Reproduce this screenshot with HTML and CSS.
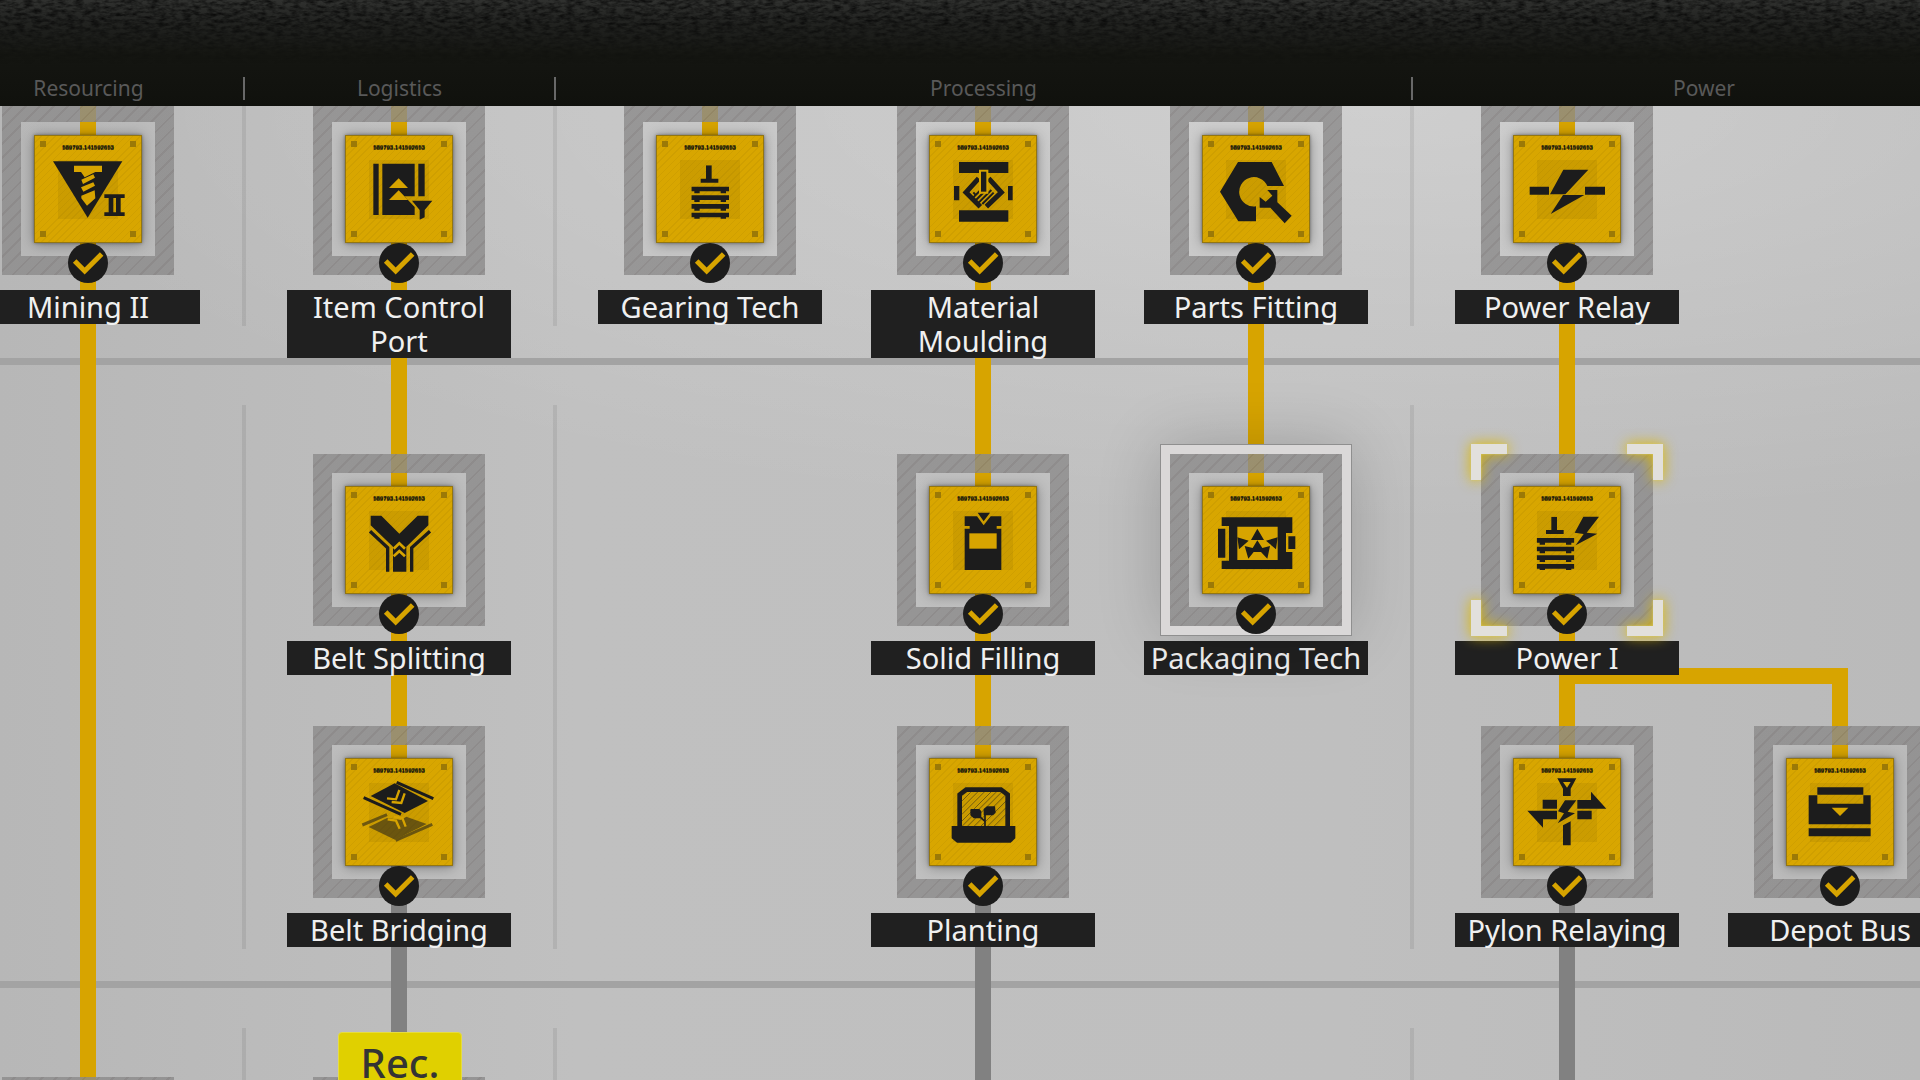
FILE: index.html
```
<!DOCTYPE html>
<html lang="en">
	<head>
		<meta charset="utf-8">
		<title>Tech Tree</title>
		<link rel="stylesheet" href="styles.css">
	</head>
	<body>
		<svg class="defs" aria-hidden="true">
			<filter id="grain" x="0" y="0" width="100%" height="100%">
				<feTurbulence type="fractalNoise" baseFrequency="0.12 0.3" numOctaves="3" seed="4"/>
				<feColorMatrix type="matrix" values="0 0 0 0 0  0 0 0 0 0  0 0 0 0 0  2 0 0 0 -0.7"/>
			</filter>
			<symbol id="tick" viewBox="0 0 120 120">
				<circle cx="60" cy="60" r="60" fill="#1c1c1c"/>
				<path d="M20 54L50 84L101 33" fill="none" stroke="#d7a400" stroke-width="15"/>
			</symbol>
			<symbol id="pallets" viewBox="0 0 113 160">
				<path d="M44 0H61V40H81V52H28V40H44Z"/>
				<path id="pallet" d="M0 64H113V78H104V84H88V78H25V84H9V78H0Z"/>
				<use href="#pallet" y="26"/>
				<use href="#pallet" y="52"/>
				<use href="#pallet" y="78"/>
			</symbol>
		</svg>

		<header>
			<svg class="grain" aria-hidden="true"><rect width="100%" height="100%" filter="url(#grain)"/></svg>
			<div class="categories">
				<span>Resourcing</span>
				<span>Logistics</span>
				<span>Processing</span>
				<span>Power</span>
			</div>
		</header>

		<main>
			<div class="board">
				<section class="tier">
					<div class="group">
						<div class="cell">
							<i class="link in"></i><i class="link out far"></i>
							<button class="node">
								<span class="frame"><span class="tile"><span class="serial">589793.141592653</span>
									<svg class="icon" viewBox="0 0 324 324">
										<path d="M57 79H265L161 248Z"/>
										<path class="cut" d="M120 92H204V111H184L152 127L141 111H120ZM142 134L178 118L183 128L147 147ZM141 157L178 142L183 152L148 170ZM142 182L182 166L184 190L159 212L142 190Z"/>
										<path d="M211 178H272V189H260V232H272V243H211V232H224V189H211ZM238 189V232H246V189Z" fill-rule="evenodd"/>
									</svg>
								</span></span>
								<svg class="tick"><use href="#tick"/></svg>
								<span class="label">Mining II</span>
							</button>
						</div>
					</div>
					<div class="group">
						<div class="cell">
							<i class="link in"></i><i class="link out far"></i>
							<button class="node">
								<span class="frame"><span class="tile"><span class="serial">589793.141592653</span>
									<svg class="icon" viewBox="0 0 324 324">
										<path d="M85 86H101V240H85ZM112 86H209V184H178L209 216V240H112ZM220 86H239V184H220Z"/>
										<path class="cut" d="M161 130L189 159H132ZM161 166L189 195H132Z"/>
										<path d="M201 197H262L239 225V247L224 254V225Z"/>
									</svg>
								</span></span>
								<svg class="tick"><use href="#tick"/></svg>
								<span class="label">Item Control Port</span>
							</button>
						</div>
					</div>
					<div class="group">
						<div class="cell">
							<i class="link in"></i>
							<button class="node">
								<span class="frame"><span class="tile"><span class="serial">589793.141592653</span>
									<svg class="icon" viewBox="0 0 324 324">
										<use href="#pallets" x="106" y="91" width="113" height="160"/>
									</svg>
								</span></span>
								<svg class="tick"><use href="#tick"/></svg>
								<span class="label">Gearing Tech</span>
							</button>
						</div>
						<div class="cell">
							<i class="link in"></i><i class="link out far"></i>
							<button class="node">
								<span class="frame"><span class="tile"><span class="serial">589793.141592653</span>
									<svg class="icon" viewBox="0 0 324 324">
										<path d="M90 81H238V114H90ZM90 226H238V260H90ZM75 153H91V196H75ZM237 153H251V196H237Z"/>
										<path class="line" stroke-width="15" d="M149 130L111 172L154 215M179 130L217 172L172 215"/>
										<path class="line" stroke-width="6" d="M133 172L141 181M133 187L152 168M141 195L174 162M149 203L187 165M160 207L194 173"/>
										<path d="M156 110H172V170H156Z" stroke="#d7a400" stroke-width="12" paint-order="stroke"/>
									</svg>
								</span></span>
								<svg class="tick"><use href="#tick"/></svg>
								<span class="label">Material Moulding</span>
							</button>
						</div>
						<div class="cell">
							<i class="link in"></i><i class="link out far"></i>
							<button class="node">
								<span class="frame"><span class="tile"><span class="serial">589793.141592653</span>
									<svg class="icon" viewBox="0 0 324 324">
										<path d="M108 81H209L246 153H196A44 44 0 1 0 162 214V259H109L54 170Z"/>
										<path d="M196 165H226V202L269 242L248 265L205 218H173V186L191 200L211 182Z"/>
									</svg>
								</span></span>
								<svg class="tick"><use href="#tick"/></svg>
								<span class="label">Parts Fitting</span>
							</button>
						</div>
					</div>
					<div class="group">
						<div class="cell">
							<i class="link in"></i><i class="link out far"></i>
							<button class="node">
								<span class="frame"><span class="tile"><span class="serial">589793.141592653</span>
									<svg class="icon" viewBox="0 0 324 324">
										<path d="M151 104H226L157 178H111ZM157 180H214L113 237L150 180ZM50 155H108V179H50ZM216 155H276V179H216Z"/>
									</svg>
								</span></span>
								<svg class="tick"><use href="#tick"/></svg>
								<span class="label">Power Relay</span>
							</button>
						</div>
					</div>
				</section>

				<section class="tier">
					<div class="group">
						<div class="cell tall">
							<i class="link through"></i>
						</div>
					</div>
					<div class="group">
						<div class="cell">
							<i class="link in"></i><i class="link out"></i>
							<button class="node">
								<span class="frame"><span class="tile"><span class="serial">589793.141592653</span>
									<svg class="icon" viewBox="0 0 324 324">
										<path d="M77 89H109L163 143L218 89H250V118L184 182V257H144V182L77 118Z"/>
										<path class="line" stroke-width="10" d="M75 136L128 185V257M255 136L200 185V257"/>
										<path class="line cutline" stroke-width="8" d="M146 188L163 172L180 188M146 211L163 195L180 211"/>
									</svg>
								</span></span>
								<svg class="tick"><use href="#tick"/></svg>
								<span class="label">Belt Splitting</span>
							</button>
						</div>
						<div class="cell">
							<i class="link in"></i><i class="link out far todo"></i>
							<button class="node">
								<span class="frame"><span class="tile"><span class="serial">589793.141592653</span>
									<svg class="icon" viewBox="0 0 324 324">
										<g opacity="0.55">
											<path d="M71 207L126 180L168 186L184 176L245 198L150 245Z"/>
											<path class="line" stroke-width="9" d="M52 201L126 170M152 247L262 199"/>
										</g>
										<path class="line cutline" stroke-width="7" d="M128 184L153 188L164 212M146 176L172 180L182 206"/>
										<path d="M77 114L149 76L249 129L179 165Z"/>
										<path class="line" stroke-width="9" d="M155 73L265 122M56 119L168 169"/>
										<path class="line cutline" stroke-width="7" d="M126 121L153 124L163 96M140 132L169 135L179 106"/>
									</svg>
								</span></span>
								<svg class="tick"><use href="#tick"/></svg>
								<span class="label">Belt Bridging</span>
							</button>
						</div>
					</div>
					<div class="group">
						<div class="cell"></div>
						<div class="cell">
							<i class="link in"></i><i class="link out"></i>
							<button class="node">
								<span class="frame"><span class="tile"><span class="serial">589793.141592653</span>
									<svg class="icon" viewBox="0 0 324 324">
										<path d="M107 91H144L164 118L185 91H217V120H203V128H217V252H107V128H122V120H107ZM146 80H183L164 106Z"/>
										<path class="cut" d="M121 142H203V188H121Z"/>
									</svg>
								</span></span>
								<svg class="tick"><use href="#tick"/></svg>
								<span class="label">Solid Filling</span>
							</button>
						</div>
						<div class="cell">
							<i class="link in"></i>
							<button class="node selected">
								<span class="frame"><span class="tile"><span class="serial">589793.141592653</span>
									<svg class="icon" viewBox="0 0 324 324">
										<path d="M59 94H271V141H252V198H271V249H59V224H81V120H59ZM48 128H70V215H48ZM259 151H280V189H259Z"/>
										<path class="cut" d="M106 122H227V222H106Z"/>
										<path d="M166 128L186 162H147ZM106 154L140 164L111 190ZM227 154L192 164L222 190ZM128 180L152 186L166 163L181 186L204 180L196 218L177 198H155L139 218Z"/>
									</svg>
								</span></span>
								<svg class="tick"><use href="#tick"/></svg>
								<span class="label">Packaging Tech</span>
							</button>
						</div>
						<div class="cell"></div>
						<div class="cell">
							<i class="link in"></i><i class="link out far todo"></i>
							<button class="node">
								<span class="frame"><span class="tile"><span class="serial">589793.141592653</span>
									<svg class="icon" viewBox="0 0 324 324">
										<path class="line" stroke-width="3" opacity="0.5" d="M98 130L125 103M98 150L150 98M98 170L170 98M98 190L190 98M100 204L206 98M116 204L222 98M136 204L232 108M156 204L232 128M176 204L232 148M196 204L232 168"/>
										<path class="line" stroke-width="14" d="M92 206V110L112 95H216L236 110V206"/>
										<path d="M68 204H259V241L245 254H84L68 241Z"/>
										<path d="M126 153H151L157 160V181H134L124 172V155ZM174 145H198L200 164L192 172H164V153Z"/>
										<path class="line" stroke-width="5" d="M168 170V206M152 176L168 190"/>
									</svg>
								</span></span>
								<svg class="tick"><use href="#tick"/></svg>
								<span class="label">Planting</span>
							</button>
						</div>
						<div class="cell"></div>
					</div>
					<div class="group">
						<div class="cell">
							<i class="link in"></i><i class="link out"></i>
							<button class="node current">
								<span class="frame"><span class="tile"><span class="serial">589793.141592653</span>
									<svg class="icon" viewBox="0 0 324 324">
										<use href="#pallets" x="71" y="92" width="113" height="160"/>
										<path d="M211 92H258L221 140L253 143L188 178L212 144L185 140Z"/>
									</svg>
								</span></span>
								<svg class="tick"><use href="#tick"/></svg>
								<span class="label">Power I</span>
							</button>
						</div>
						<div class="cell"></div>
						<div class="cell">
							<i class="link in"></i><i class="link out far todo"></i>
							<button class="node">
								<span class="frame"><span class="tile"><span class="serial">589793.141592653</span>
									<svg class="icon" viewBox="0 0 324 324">
										<path d="M133 61H190L173 92V114H150V92ZM150 202L173 190V262H150ZM89 125H132V152H89ZM193 126H234V101L280 152H193ZM43 158H132V184H90V209ZM193 158H236V184H193ZM156 127H190L164 161L186 166L134 196L153 166L135 160Z"/>
										<path class="cut" d="M150 72H173L162 89Z"/>
									</svg>
								</span></span>
								<svg class="tick"><use href="#tick"/></svg>
								<span class="label">Pylon Relaying</span>
							</button>
						</div>
						<div class="cell">
							<i class="elbow"></i>
							<button class="node">
								<span class="frame"><span class="tile"><span class="serial">589793.141592653</span>
									<svg class="icon" viewBox="0 0 324 324">
										<path d="M94 88H232V110H94ZM68 112H94V137H232V112H254V199H68ZM68 211H254V235H68Z"/>
										<path class="cut" d="M137 149H187L162 174Z"/>
									</svg>
								</span></span>
								<svg class="tick"><use href="#tick"/></svg>
								<span class="label">Depot Bus</span>
							</button>
						</div>
					</div>
				</section>

				<section class="tier">
					<div class="group">
						<div class="cell">
							<i class="link in"></i>
							<button class="node"><span class="frame"></span></button>
						</div>
					</div>
					<div class="group">
						<div class="cell">
							<i class="link in todo"></i>
							<button class="node"><span class="frame"></span></button>
							<span class="rec">Rec.</span>
						</div>
					</div>
					<div class="group">
						<div class="cell"></div>
						<div class="cell"><i class="link in todo"></i></div>
						<div class="cell"></div>
					</div>
					<div class="group">
						<div class="cell"><i class="link in todo"></i></div>
						<div class="cell"></div>
					</div>
				</section>
			</div>
		</main>
	</body>
</html>
```
FILE: styles.css
```
* {
	box-sizing: border-box;
}
body {
	margin: 0;
	height: 100vh;
	display: flex;
	flex-direction: column;
	overflow: hidden;
	font-family: "Noto Sans", sans-serif;
	background: #c0c0c0;
}
.defs {
	position: absolute;
	width: 0;
	height: 0;
}

/* header */
header {
	position: relative;
	display: flex;
	align-items: flex-end;
	height: 106px;
	background: linear-gradient(#30312f, #232422 20px, #141511 56px, #10110d);
	flex: none;
	overflow: hidden;
}
.grain {
	position: absolute;
	left: 0;
	top: 0;
	width: 100%;
	height: 64px;
	opacity: 0.7;
	mask: linear-gradient(#000 20px, transparent);
}
.categories,
.tier {
	display: grid;
	grid-template-columns: 311px 311px 857px 584px;
	margin-left: -67px;
}
.categories {
	position: relative;
	padding-bottom: 6px;
	font-size: 21px;
	line-height: 23px;
	color: #595959;
	text-align: center;
}
.categories span + span {
	box-shadow: -1px 0 #686868, inset 1px 0 #686868;
}

/* board */
main {
	flex: 1;
	overflow: hidden;
	background:
		radial-gradient(ellipse 1400px 420px at 72% 0, rgba(255, 255, 255, 0.25), transparent),
		linear-gradient(90deg, #b7b7b7, #c0c0c0 30%, #bfbfbf 70%, #bababa);
}
.board {
	margin-top: -92px;
	isolation: isolate;
}
.tier {
	padding: 40px 0 32px;
	border-bottom: 7px solid #a3a3a3;
}
.group {
	position: relative;
	display: grid;
	grid-template-columns: repeat(auto-fill, 273px);
	grid-auto-rows: 272px;
	padding: 0 19px;
}
.group + .group::before {
	content: "";
	position: absolute;
	left: -2px;
	top: 0;
	bottom: 0;
	width: 4px;
	background: rgba(0, 0, 0, 0.07);
}
.cell {
	position: relative;
	padding: 49px 1px 0 0;
}
.tall {
	grid-row: span 2;
}

/* links between nodes */
.link {
	position: absolute;
	left: 128px;
	width: 16px;
	background: #d7a400;
}
.todo {
	background: #818181;
}
.in {
	top: 0;
	height: 81px;
}
.out {
	top: 180px;
	bottom: 0;
}
.far {
	bottom: -79px;
}
.through {
	top: 0;
	bottom: -79px;
}
.elbow {
	position: absolute;
	top: -9px;
	right: 129px;
	width: 289px;
	height: 90px;
	border: solid #d7a400;
	border-width: 16px 16px 0 0;
}

/* node */
.node {
	position: relative;
	z-index: 1;
	display: flex;
	flex-direction: column;
	align-items: center;
	width: 100%;
	padding: 0;
	border: none;
	background: none;
	font: inherit;
	color: #f0f0f0;
	cursor: pointer;
}
.frame {
	position: relative;
	display: grid;
	place-items: center;
	width: 172px;
	height: 172px;
}
.frame::before {
	content: "";
	position: absolute;
	inset: 0;
	padding: 19px;
	background: repeating-linear-gradient(135deg, rgba(139, 138, 138, 0.8) 0 8px, rgba(130, 127, 127, 0.8) 8px 10px);
	mask: linear-gradient(#000 0 0) content-box exclude, linear-gradient(#000 0 0);
}
.tile {
	position: relative;
	width: 108px;
	height: 108px;
	border: 1px solid #937612;
	background:
		linear-gradient(#9b7907 0 0) 5px 5px / 6px 6px no-repeat,
		linear-gradient(#9b7907 0 0) 95px 5px / 6px 6px no-repeat,
		linear-gradient(#9b7907 0 0) 5px 95px / 6px 6px no-repeat,
		linear-gradient(#9b7907 0 0) 95px 95px / 6px 6px no-repeat,
		linear-gradient(rgba(0, 0, 0, 0.06) 0 0) 23px 24px / 60px 59px no-repeat,
		repeating-linear-gradient(135deg, #d8a600 0 4px, #cf9f00 4px 5px);
	box-shadow: 0 0 3px rgba(0, 0, 0, 0.4), 0 1px 12px rgba(0, 0, 0, 0.35);
}
.serial {
	display: block;
	padding-top: 7px;
	font: bold 6px/9px "Liberation Sans", sans-serif;
	color: #1d1a0c;
	text-shadow: 0 1px #1d1a0c;
}
.icon {
	position: absolute;
	left: -1px;
	top: -1px;
	width: 108px;
	height: 108px;
	fill: #1c1c1c;
}
.cut {
	fill: #d7a400;
}
.line {
	fill: none;
	stroke: #1c1c1c;
}
.cutline {
	stroke: #d7a400;
}
.tick {
	position: relative;
	width: 40px;
	height: 40px;
	margin-top: -32px;
}
.label {
	width: 224px;
	margin-top: 7px;
	background: #202020;
	font-size: 29px;
	line-height: 34px;
}

/* node states */
.selected .frame {
	outline: 9px solid #dad8d8;
	box-shadow: 0 0 0 10px #8f8f8f, 0 0 60px 8px rgba(0, 0, 0, 0.2);
}
.current .frame::after {
	content: "";
	position: absolute;
	inset: -10px;
	background:
		conic-gradient(#e2e0dc 0 0) 0 0 / 36px 10px,
		conic-gradient(#e2e0dc 0 0) 0 0 / 10px 36px,
		conic-gradient(#e2e0dc 0 0) 100% 0 / 36px 10px,
		conic-gradient(#e2e0dc 0 0) 100% 0 / 10px 36px,
		conic-gradient(#e2e0dc 0 0) 0 100% / 36px 10px,
		conic-gradient(#e2e0dc 0 0) 0 100% / 10px 36px,
		conic-gradient(#e2e0dc 0 0) 100% 100% / 36px 10px,
		conic-gradient(#e2e0dc 0 0) 100% 100% / 10px 36px;
	background-repeat: no-repeat;
	filter: drop-shadow(0 0 1px #d8c860) drop-shadow(0 0 7px #dcb800);
}

.rec {
	position: absolute;
	z-index: 2;
	top: 4px;
	left: 75px;
	width: 124px;
	height: 70px;
	border: 1px solid #e6dc40;
	border-radius: 4px;
	background: #e0d000;
	color: #343434;
	font-size: 40px;
	font-weight: 500;
	line-height: 60px;
	text-align: center;
}
```
